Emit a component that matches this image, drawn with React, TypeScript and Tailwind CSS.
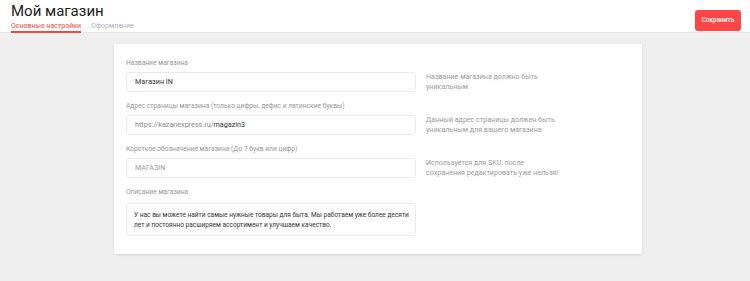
import React from "react";

const rows = [
  {
    label: "Название магазина",
    value: <span className="text-[#333]">Магазин IN</span>,
    help: ["Название магазина должно быть", "уникальным"],
  },
  {
    label: "Адрес страницы магазина (только цифры, дефис и латинские буквы)",
    value: (
      <span className="text-[#888]">
        https://kazanexpress.ru/<span className="text-[#333]">magazin3</span>
      </span>
    ),
    help: ["Данный адрес страницы должен быть", "уникальным для вашего магазина"],
  },
  {
    label: "Короткое обозначение магазина (До 7 букв или цифр)",
    value: <span className="text-[#999]">МАГАЗIN</span>,
    help: ["Используется для SKU, после", "сохранения редактировать уже нельзя!"],
  },
];

export default function App() {
  return (
    <div
      className="w-[750px] h-[281px] bg-[#efefef] overflow-hidden"
      style={{ fontFamily: "Roboto, 'Noto Sans', sans-serif" }}
    >
      <div className="h-[33px] bg-white flex justify-between border-b border-[#e8e8e8]">
        <div className="pl-[11px] flex flex-col">
          <div className="text-[15px] leading-[18px] text-[#222] font-normal pt-[2px]">Мой магазин</div>
          <div className="flex gap-[10px] mt-[1px] text-[7px] leading-[10px]">
            <div className="text-[#f04848] border-b-2 border-[#f04848] h-[12px]">Основные настройки</div>
            <div className="text-[#a9b0bd]">Оформление</div>
          </div>
        </div>
        <div className="pr-[9px] pt-[5px]">
          <button className="w-[46px] h-[21px] rounded-[3px] bg-[#ff4646] text-white text-[6.5px] font-medium">
            Сохранить
          </button>
        </div>
      </div>
      <div className="pt-[11px] pl-[114px]">
        <div className="w-[528px] bg-white shadow-[0_1px_2px_rgba(0,0,0,0.12)] pt-[14px] pb-[18px] px-[12px] flex flex-col gap-[9px]">
          {rows.map((r) => (
            <div key={r.label} className="flex flex-col">
              <div className="text-[6.7px] leading-[10px] text-[#969696] mb-[4px]">{r.label}</div>
              <div className="flex items-center gap-[10px]">
                <div className="w-[290px] h-[20px] border border-[#ebebeb] rounded-[3px] flex items-center pl-[8px] text-[7.2px]">
                  {r.value}
                </div>
                <div className="text-[7.1px] leading-[10px] text-[#9a9a9a]">
                  {r.help[0]}
                  <br />
                  {r.help[1]}
                </div>
              </div>
            </div>
          ))}
          <div className="flex flex-col">
            <div className="text-[6.7px] leading-[10px] text-[#969696] mb-[6px]">Описание магазина</div>
            <div className="w-[290px] h-[33px] border border-[#ebebeb] rounded-[3px] px-[7px] pt-[6px] text-[6.55px] leading-[10px] text-[#333] whitespace-nowrap">
              У нас вы можете найти самые нужные товары для быта. Мы работаем уже более десяти
              <br />
              лет и постоянно расширяем ассортимент и улучшаем качество.
            </div>
          </div>
        </div>
      </div>
    </div>
  );
}
